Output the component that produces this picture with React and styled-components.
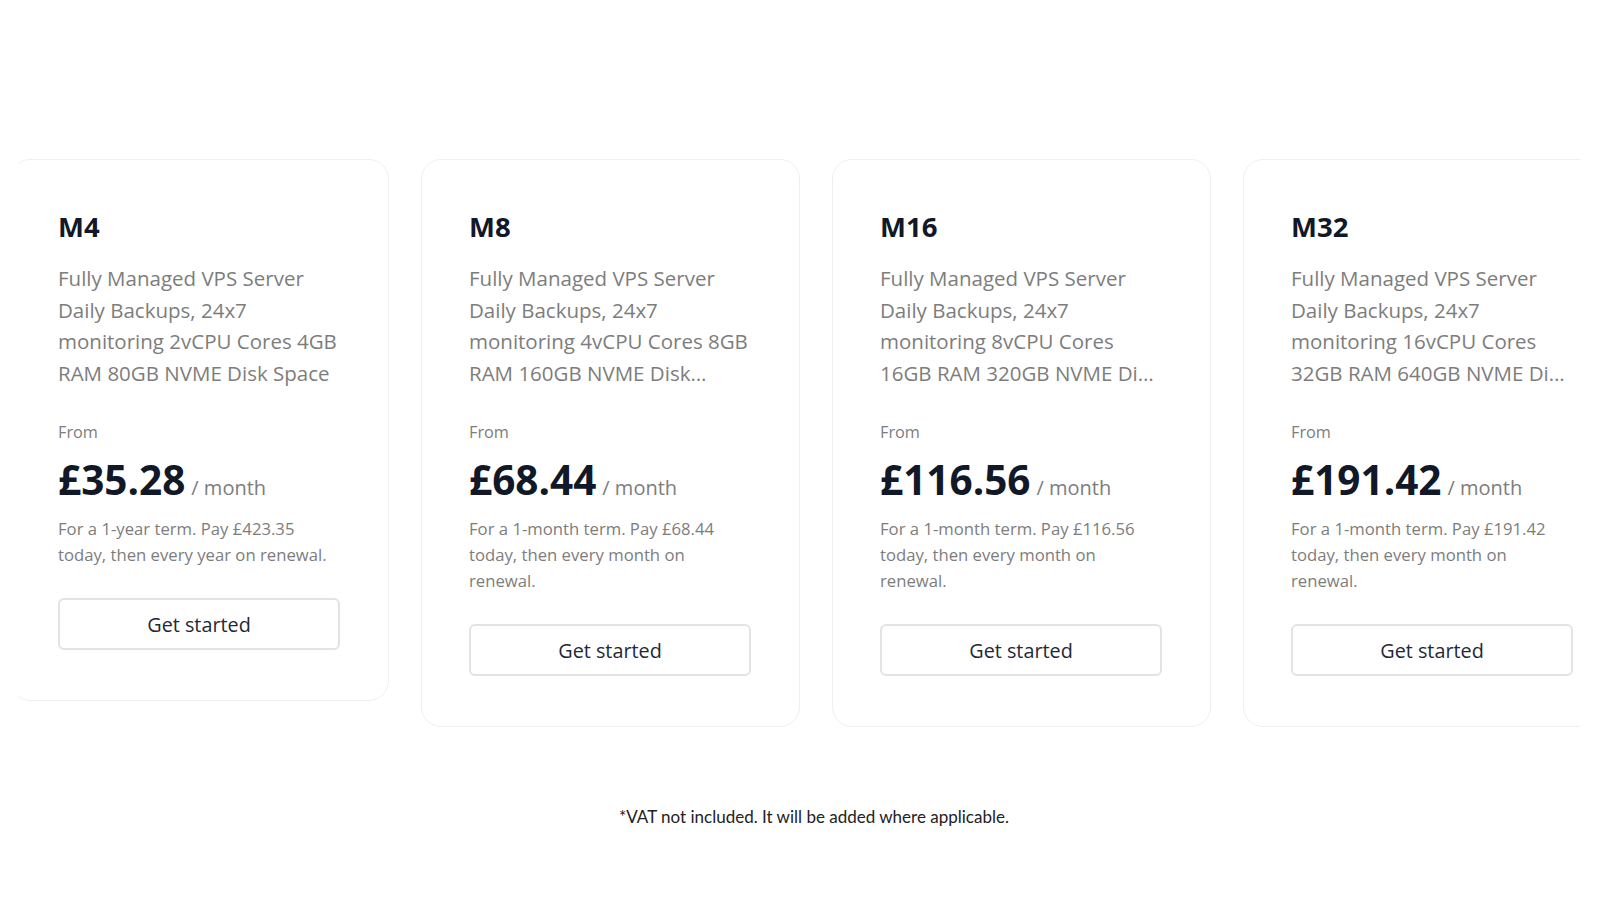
import React from "react";
import styled, { createGlobalStyle } from "styled-components";

const plans = [
  {
    name: "M4",
    desc: "Fully Managed VPS Server Daily Backups, 24x7 monitoring 2vCPU Cores 4GB RAM 80GB NVME Disk Space",
    price: "£35.28",
    term: "For a 1-year term. Pay £423.35 today, then every year on renewal.",
  },
  {
    name: "M8",
    desc: "Fully Managed VPS Server Daily Backups, 24x7 monitoring 4vCPU Cores 8GB RAM 160GB NVME Disk Space",
    price: "£68.44",
    term: "For a 1-month term. Pay £68.44 today, then every month on renewal.",
  },
  {
    name: "M16",
    desc: "Fully Managed VPS Server Daily Backups, 24x7 monitoring 8vCPU Cores 16GB RAM 320GB NVME Disk Space",
    price: "£116.56",
    term: "For a 1-month term. Pay £116.56 today, then every month on renewal.",
  },
  {
    name: "M32",
    desc: "Fully Managed VPS Server Daily Backups, 24x7 monitoring 16vCPU Cores 32GB RAM 640GB NVME Disk Space",
    price: "£191.42",
    term: "For a 1-month term. Pay £191.42 today, then every month on renewal.",
  },
];

export default function App() {
  return (
    <>
      <GlobalStyle />
      <Wrapper>
        <Viewport>
          <Track>
            {plans.map((p) => (
              <Card key={p.name}>
                <Title>{p.name}</Title>
                <Desc>{p.desc}</Desc>
                <From>From</From>
                <PriceRow>
                  <Price>{p.price}</Price>
                  <Per>/ month</Per>
                </PriceRow>
                <Term>{p.term}</Term>
                <Button>Get started</Button>
              </Card>
            ))}
          </Track>
        </Viewport>
        <Note>*VAT not included. It will be added where applicable.</Note>
      </Wrapper>
    </>
  );
}

const GlobalStyle = createGlobalStyle`
  body {
    margin: 0;
    background: #ffffff;
    font-family: "Open Sans", "Noto Sans", sans-serif;
  }
`;
const Wrapper = styled.section`
  width: 100%;
  padding-top: 159px;
`;
const Viewport = styled.div`
  margin: 0 20px 0 18px;
  overflow: hidden;
`;
const Track = styled.div`
  display: flex;
  align-items: flex-start;
  gap: 32px;
  transform: translateX(-8px);
`;
const Card = styled.div`
  flex: 0 0 379px;
  box-sizing: border-box;
  padding: 50px 48px 50px 47px;
  border: 1.5px solid #efefef;
  border-radius: 20px;
  background: #fff;
  display: flex;
  flex-direction: column;
`;
const Title = styled.h3`
  margin: 0;
  font-size: 27.5px;
  line-height: 34px;
  font-weight: 700;
  color: #111827;
`;
const Desc = styled.p`
  margin: 19px 0 0;
  font-size: 20.5px;
  line-height: 31.5px;
  color: #7d7d7d;
  display: -webkit-box;
  -webkit-line-clamp: 4;
  -webkit-box-orient: vertical;
  overflow: hidden;
`;
const From = styled.div`
  margin-top: 31px;
  font-size: 16.3px;
  line-height: 24px;
  color: #7d7d7d;
`;
const PriceRow = styled.div`
  margin-top: 12px;
  display: flex;
  align-items: baseline;
  gap: 6px;
`;
const Price = styled.span`
  font-size: 40.5px;
  line-height: 48px;
  font-weight: 700;
  color: #111827;
`;
const Per = styled.span`
  font-size: 20px;
  color: #7d7d7d;
`;
const Term = styled.p`
  margin: 12px 0 0;
  font-size: 16.7px;
  line-height: 26px;
  color: #7d7d7d;
`;
const Button = styled.button`
  margin-top: 30px;
  height: 52px;
  width: 100%;
  border: 2px solid #e3e3e3;
  border-radius: 6px;
  background: #fff;
  font-family: "Open Sans", "Noto Sans", sans-serif;
  font-size: 19.8px;
  color: #1f2937;
  cursor: pointer;
`;
const Note = styled.p`
  margin: 78px 0 0;
  padding-left: 28px;
  text-align: center;
  font-family: "Lato", "Noto Sans", sans-serif;
  font-size: 17px;
  line-height: 24px;
  color: #222;
`;
